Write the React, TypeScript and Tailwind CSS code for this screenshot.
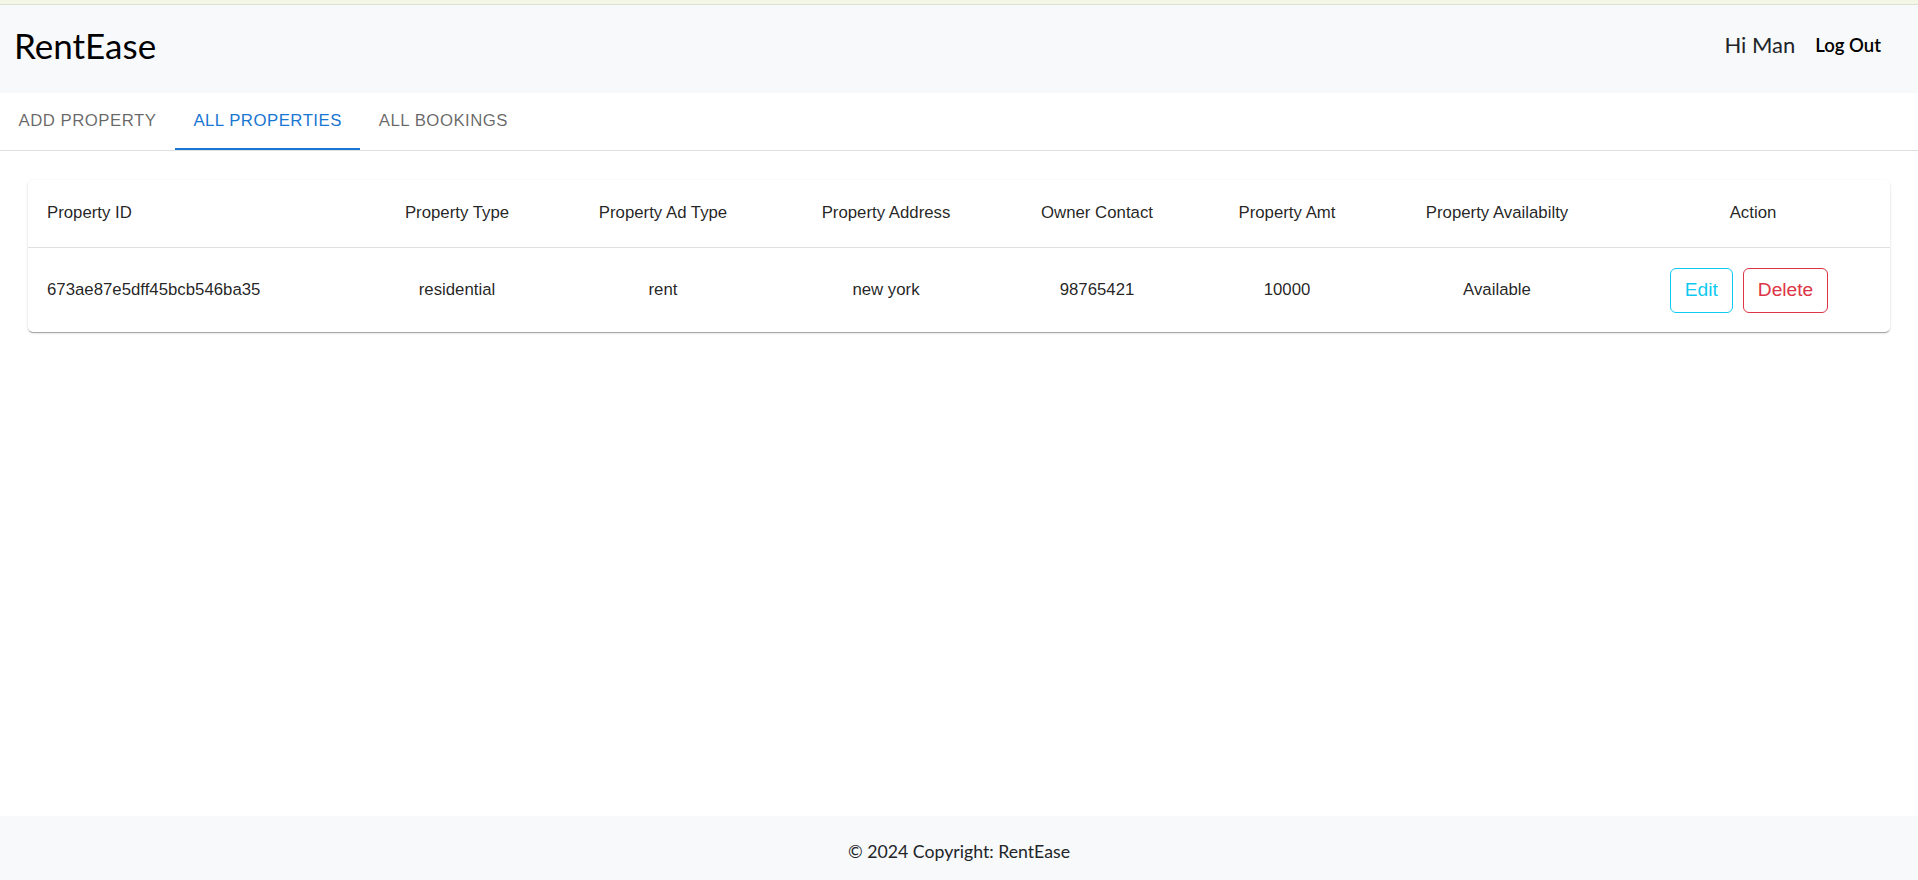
import React from "react";

const cols = [
  { label: "Property ID", w: 334, align: "left" },
  { label: "Property Type", w: 190, align: "center" },
  { label: "Property Ad Type", w: 222, align: "center" },
  { label: "Property Address", w: 224, align: "center" },
  { label: "Owner Contact", w: 198, align: "center" },
  { label: "Property Amt", w: 182, align: "center" },
  { label: "Property Availabilty", w: 238, align: "center" },
  { label: "Action", w: 274, align: "center" },
];

const row = [
  "673ae87e5dff45bcb546ba35",
  "residential",
  "rent",
  "new york",
  "98765421",
  "10000",
  "Available",
];

export default function App() {
  const gill = { fontFamily: '"Gill Sans", "Gill Sans MT", Lato, "Open Sans", sans-serif' };
  return (
    <div className="min-h-screen flex flex-col bg-white" style={{ fontFamily: '"Liberation Sans", Arial, sans-serif' }}>
      <div className="h-[5px] bg-[#f4f6e6] border-b border-[#dcdfd6]" />
      <header className="h-[88px] bg-[#f8f9fa] flex items-center justify-between pl-[14px] pr-[37px] pb-[8px]" style={gill}>
        <div className="text-[35px] text-black leading-none">RentEase</div>
        <div className="flex items-center">
          <span className="text-[22px] text-[#212529] leading-none">Hi Man</span>
          <span className="ml-[20px] text-[18.5px] text-black font-semibold leading-none">Log Out</span>
        </div>
      </header>
      <div className="border-b border-[#e0e0e0] flex h-[58px]">
        {[
          { t: "ADD PROPERTY", active: false },
          { t: "ALL PROPERTIES", active: true },
          { t: "ALL BOOKINGS", active: false },
        ].map((tab) => (
          <div
            key={tab.t}
            className={
              "relative flex items-center justify-center px-[18.5px] pb-[1px] text-[16.8px] tracking-[0.48px] " +
              (tab.active ? "text-[#1976d2]" : "text-[rgba(0,0,0,0.6)]")
            }
          >
            {tab.t}
            {tab.active && <div className="absolute left-0 right-0 bottom-0 h-[2px] bg-[#1976d2]" />}
          </div>
        ))}
      </div>
      <main className="flex-1 px-[28px] pt-[29px]">
        <div className="bg-white rounded-[5px] shadow-[0px_2px_1px_-1px_rgba(0,0,0,0.2),0px_1px_1px_0px_rgba(0,0,0,0.14),0px_1px_3px_0px_rgba(0,0,0,0.12)]">
          <table className="w-full table-fixed border-collapse text-[16.8px] text-[rgba(0,0,0,0.87)]">
            <colgroup>
              {cols.map((c) => (
                <col key={c.label} style={{ width: c.w }} />
              ))}
            </colgroup>
            <thead>
              <tr className="h-[67px] border-b border-[#e0e0e0]">
                {cols.map((c, i) => (
                  <th
                    key={c.label}
                    className={"font-normal px-[19px] pb-[1px] " + (i === 0 ? "text-left" : "text-center")}
                  >
                    {c.label}
                  </th>
                ))}
              </tr>
            </thead>
            <tbody>
              <tr className="h-[85px]">
                {row.map((v, i) => (
                  <td key={i} className={"px-[19px] " + (i === 0 ? "text-left" : "text-center")}>
                    {v}
                  </td>
                ))}
                <td className="px-[19px] text-center">
                  <div className="inline-flex items-center gap-[10px] -ml-[8px] mt-[1px]">
                    <button className="h-[45px] px-[14px] border border-[#0dcaf0] text-[#0dcaf0] rounded-[6px] text-[19.2px] bg-white">
                      Edit
                    </button>
                    <button className="h-[45px] px-[14px] border border-[#dc3545] text-[#dc3545] rounded-[6px] text-[19.2px] bg-white">
                      Delete
                    </button>
                  </div>
                </td>
              </tr>
            </tbody>
          </table>
        </div>
      </main>
      <footer className="h-[64px] bg-[#f8f9fa] flex items-center justify-center pt-[8px] text-[17.7px] text-[#212529]" style={gill}>
        © 2024 Copyright: RentEase
      </footer>
    </div>
  );
}
